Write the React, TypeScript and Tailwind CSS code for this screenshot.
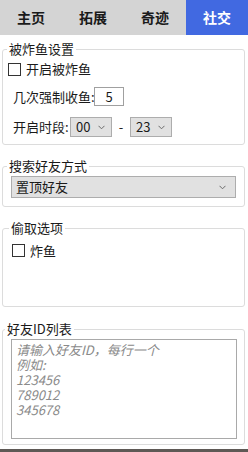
import React from 'react';

const tabs = ['主页', '拓展', '奇迹', '社交'];

const Chevron = () => (
  <svg width="7" height="5" viewBox="0 0 7 5" className="shrink-0">
    <path d="M0.5 0.8 L3.5 3.8 L6.5 0.8" fill="none" stroke="#6b6b6b" strokeWidth="1" />
  </svg>
);

const Checkbox = () => (
  <span className="w-[13px] h-[13px] border border-[#333333] bg-white shrink-0" />
);

const Select: React.FC<{ value: string; wide?: boolean }> = ({ value, wide }) => (
  <div
    className={`flex items-center justify-between bg-[#e1e1e1] border border-[#adadad] text-[13px] leading-[18px] text-[#1a1a1a] ${
      wide ? 'mt-[2px] w-[225px] h-[22px] pl-[4px] pr-[9px]' : 'w-[42px] h-[20px] pl-[5px] pr-[6px]'
    }`}
  >
    <span>{value}</span>
    <Chevron />
  </div>
);

export default function App() {
  const active = 3;
  return (
    <div
      className="w-[248px] h-[452px] bg-white flex flex-col overflow-hidden text-[#1a1a1a]"
      style={{ fontFamily: '"Noto Sans CJK SC", "Noto Sans", sans-serif' }}
    >
      {/* tab bar */}
      <div className="grid grid-cols-4 h-[35px] bg-[#d4d4d4] shrink-0">
        {tabs.map((t, i) => (
          <div
            key={t}
            className={`flex items-center justify-center text-[14px] font-bold ${
              i === active ? 'bg-[#4169e1] text-white' : 'text-[#1a1a1a]'
            }`}
          >
            {t}
          </div>
        ))}
      </div>

      {/* 被炸鱼设置 */}
      <fieldset className="mt-[6px] ml-[2px] w-[243px] border border-[#dcdcdc] rounded-[3px] pl-[5px] pb-[7px]">
        <legend className="ml-[-1px] px-[2px] text-[13px] leading-[16px]">被炸鱼设置</legend>
        <label className="mt-[5px] flex items-center gap-[5px] h-[14px] text-[13px] leading-[14px]">
          <Checkbox />
          <span>开启被炸鱼</span>
        </label>
        <div className="mt-[11px] flex items-center pl-[5px] h-[19px] text-[13px] whitespace-nowrap">
          <span className="w-[81px] shrink-0">几次强制收鱼:</span>
          <div className="w-[30px] h-[19px] border border-[#a0a0a0] flex items-center justify-center text-[13px] leading-[17px]">
            5
          </div>
        </div>
        <div className="mt-[11px] flex items-center pl-[5px] h-[20px] text-[13px] whitespace-nowrap">
          <span className="w-[57px] shrink-0">开启时段:</span>
          <Select value="00" />
          <span className="w-[18px] text-center">-</span>
          <Select value="23" />
        </div>
      </fieldset>

      {/* 搜索好友方式 */}
      <fieldset className="mt-[13px] ml-[2px] w-[243px] border border-[#dcdcdc] rounded-[3px] pl-[8px] pb-[8px]">
        <legend className="ml-[-4px] px-[2px] text-[13px] leading-[16px]">搜索好友方式</legend>
        <Select value="置顶好友" wide />
      </fieldset>

      {/* 偷取选项 */}
      <fieldset className="mt-[13px] ml-[2px] w-[243px] border border-[#dcdcdc] rounded-[3px] pl-[9px] pb-[49px]">
        <legend className="ml-[-3px] px-[2px] text-[13px] leading-[16px]">偷取选项</legend>
        <label className="mt-[8px] flex items-center gap-[5px] h-[13px] text-[13px] leading-[13px]">
          <Checkbox />
          <span>炸鱼</span>
        </label>
      </fieldset>

      {/* 好友ID列表 */}
      <fieldset className="mt-[14px] ml-[2px] w-[243px] border border-[#dcdcdc] rounded-[3px] pl-[8px] pb-[5px]">
        <legend className="ml-[-6px] px-[2px] text-[13px] leading-[16px]">好友ID列表</legend>
        <textarea
          className="mt-[2px] block w-[226px] h-[100px] border border-[#a9a9a9] resize-none px-[4px] pt-[2px] text-[13px] leading-[15px] italic placeholder:text-[#8a8a8a] outline-none"
          placeholder={'请输入好友ID，每行一个\n例如:\n123456\n789012\n345678'}
        />
      </fieldset>

      <div className="mt-auto h-[3px] bg-[#5e5955] shrink-0" />
    </div>
  );
}
